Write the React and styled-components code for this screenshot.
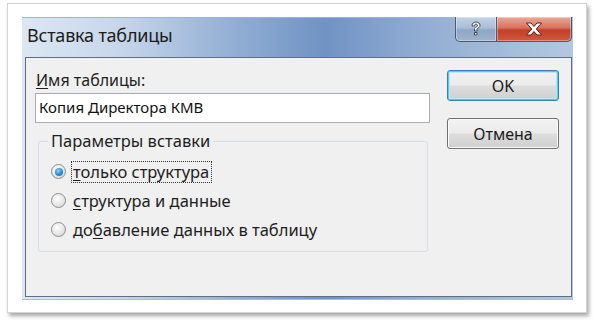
import React from 'react';
import styled, { createGlobalStyle } from 'styled-components';

const Global = createGlobalStyle`
  html, body {
    margin: 0;
    padding: 0;
    background: #ffffff;
  }
  body {
    font-family: "Noto Sans", "Open Sans", sans-serif;
  }
`;

// Page canvas
const Page = styled.div`
  width: 594px;
  height: 323px;
  overflow: hidden;
  padding: 3px 0 0 7px;
  box-sizing: border-box;
`;

// White photo-like frame with a soft shadow
const Paper = styled.div`
  width: 580px;
  height: 310px;
  box-sizing: border-box;
  background: #ffffff;
  border: 1px solid #d4d4d4;
  box-shadow: 2px 3px 4px rgba(0, 0, 0, 0.35);
  padding: 13px 0 0 14px;
`;

// Window with glass frame
const Window = styled.div`
  width: 551px;
  height: 283px;
  box-sizing: border-box;
  display: flex;
  flex-direction: column;
  padding: 0 1px 3px 3px;
  border-top: 1px solid #9db4d2;
  background: linear-gradient(
    90deg,
    #dde7f2 0%,
    #c6d6ea 18%,
    #8eabd2 40%,
    #7093c4 55%,
    #95b0d4 75%,
    #b3c7e0 100%
  );
  box-shadow: inset 0 -1px 0 #a9bfdc;
`;

const TitleBar = styled.div`
  height: 39px;
  display: flex;
  align-items: flex-start;
  justify-content: space-between;
`;

const Title = styled.div`
  padding: 5px 0 0 2px;
  font-size: 18px;
  color: #1b1b1b;
  letter-spacing: -0.2px;
`;

const Caption = styled.div`
  display: flex;
  margin-top: -1px;
`;

const CaptionButton = styled.div`
  height: 25px;
  width: ${(p) => (p.$close ? 75 : 42)}px;
  box-sizing: border-box;
  display: flex;
  align-items: center;
  justify-content: center;
  border: 1px solid #4c5a6e;
  border-top: none;
  border-radius: ${(p) => (p.$close ? '0 0 5px 0' : '0 0 0 5px')};
  border-left: ${(p) => (p.$close ? 'none' : '1px solid #4c5a6e')};
  background: ${(p) =>
    p.$close
      ? 'linear-gradient(180deg, #e9ab9a 0%, #d8705d 45%, #c23f27 55%, #d15a3f 100%)'
      : 'linear-gradient(180deg, #c4d3e6 0%, #a9bdd6 45%, #8ea6c5 55%, #9fb4cf 100%)'};
  box-shadow: inset 0 0 0 1px rgba(255, 255, 255, 0.35);
`;

const Client = styled.div`
  flex: 1;
  background: #f0f0f0;
  border: 1px solid #5e6f86;
  display: flex;
  justify-content: space-between;
  padding: 11px 12px 0 9px;
`;

const Left = styled.div`
  width: 395px;
  display: flex;
  flex-direction: column;
`;

const Label = styled.div`
  font-size: 16px;
  color: #1e1e1e;
  padding-left: 1px;
  height: 24px;
  line-height: 22px;
`;

const U = styled.span`
  text-decoration: underline;
  text-underline-offset: 2px;
`;

const Input = styled.div`
  height: 30px;
  box-sizing: border-box;
  background: #ffffff;
  border: 1px solid #abadb3;
  border-top-color: #a4a9b5;
  padding: 0 3px;
  font-size: 15px;
  line-height: 27px;
  color: #111;
`;

const Group = styled.fieldset`
  margin: 7px 0 0 3px;
  padding: 9px 0 0 12px;
  height: 122px;
  width: 390px;
  box-sizing: border-box;
  border: 1px solid #d5dfe5;
  border-radius: 3px;
  display: flex;
  flex-direction: column;
  gap: 8px;
`;

const Legend = styled.legend`
  font-size: 16.5px;
  line-height: 22px;
  color: #1e1e1e;
  padding: 0 3px;
  margin-left: -3px;
`;

const Option = styled.label`
  display: flex;
  align-items: center;
  gap: 6px;
  height: 21px;
  font-size: 16.5px;
  color: #1e1e1e;
`;

const Radio = styled.span`
  width: 15px;
  height: 15px;
  border-radius: 50%;
  box-sizing: border-box;
  border: 1px solid #8f8f8f;
  background: radial-gradient(circle at 40% 35%, #ffffff 0%, #e4e4e4 60%, #c9c9c9 100%);
  display: flex;
  align-items: center;
  justify-content: center;
  flex-shrink: 0;
  &::after {
    content: '';
    display: ${(p) => (p.$checked ? 'block' : 'none')};
    width: 8px;
    height: 8px;
    border-radius: 50%;
    background: radial-gradient(circle at 40% 35%, #8fd4ff 0%, #2c8ed8 50%, #145ea8 100%);
  }
`;

const OptionText = styled.span`
  padding: 0 2px 0 1px;
  outline: ${(p) => (p.$focus ? '1px dotted #333' : 'none')};
  line-height: 20px;
`;

const Right = styled.div`
  width: 112px;
  display: flex;
  flex-direction: column;
  gap: 17px;
  padding-top: 1px;
`;

const Button = styled.div`
  height: 31px;
  box-sizing: border-box;
  border: 1px solid ${(p) => (p.$default ? '#3c7fb1' : '#707070')};
  border-radius: 3px;
  background: linear-gradient(180deg, #f2f2f2 0%, #ebebeb 48%, #dddddd 52%, #cfcfcf 100%);
  box-shadow: ${(p) =>
    p.$default ? 'inset 0 0 0 1px #56c8f5, inset 0 0 0 2px #bde6f8' : 'inset 0 0 0 1px #fcfcfc'};
  display: flex;
  align-items: center;
  justify-content: center;
  font-size: 16px;
  color: #1b1b1b;
`;

const HelpIcon = () => (
  <svg width="14" height="16" viewBox="0 0 14 16">
    <path
      d="M3 5 C3 2 5 1 7 1 C9.5 1 11 2.5 11 4.5 C11 6.5 9 7 8 8 L8 10 L5.5 10 L5.5 7.5 C6.5 6 8.5 5.8 8.5 4.5 C8.5 3.6 7.8 3.2 7 3.2 C6 3.2 5.5 3.8 5.5 5 Z M5.5 11.5 L8 11.5 L8 14 L5.5 14 Z"
      fill="#ffffff"
      stroke="#3d4a5c"
      strokeWidth="1"
    />
  </svg>
);

const CloseIcon = () => (
  <svg width="18" height="14" viewBox="0 0 18 14">
    <path
      d="M1.5 1 L6 1 L9 4.5 L12 1 L16.5 1 L11.3 7 L16.5 13 L12 13 L9 9.5 L6 13 L1.5 13 L6.7 7 Z"
      fill="#ffffff"
      stroke="#5a2218"
      strokeWidth="1"
      strokeLinejoin="round"
    />
  </svg>
);

export default function App() {
  return (
    <>
      <Global />
      <Page>
        <Paper>
          <Window>
            <TitleBar>
              <Title>Вставка таблицы</Title>
              <Caption>
                <CaptionButton>
                  <HelpIcon />
                </CaptionButton>
                <CaptionButton $close>
                  <CloseIcon />
                </CaptionButton>
              </Caption>
            </TitleBar>
            <Client>
              <Left>
                <Label>
                  <U>И</U>мя таблицы:
                </Label>
                <Input>Копия Директора КМВ</Input>
                <Group>
                  <Legend>Параметры вставки</Legend>
                  <Option>
                    <Radio $checked />
                    <OptionText $focus>
                      <U>т</U>олько структура
                    </OptionText>
                  </Option>
                  <Option>
                    <Radio />
                    <OptionText>
                      <U>с</U>труктура и данные
                    </OptionText>
                  </Option>
                  <Option>
                    <Radio />
                    <OptionText>
                      до<U>б</U>авление данных в таблицу
                    </OptionText>
                  </Option>
                </Group>
              </Left>
              <Right>
                <Button $default>OK</Button>
                <Button>Отмена</Button>
              </Right>
            </Client>
          </Window>
        </Paper>
      </Page>
    </>
  );
}
